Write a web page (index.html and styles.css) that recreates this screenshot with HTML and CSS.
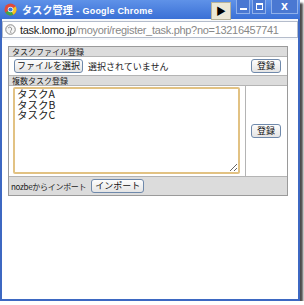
FILE: index.html
```html
<!DOCTYPE html>
<html lang="ja">
<head>
    <meta charset="UTF-8">
    <title>タスク管理</title>
    <link rel="stylesheet" href="styles.css">
</head>
<body>

    <div class="window">
        <div class="titlebar">
            <svg class="logo" width="13" height="13" viewBox="0 0 26 26">
                <circle cx="13" cy="13" r="12" fill="#e04a3a"/>
                <path d="M13 13 L2.6 19 A12 12 0 0 0 19 23.4 Z" fill="#3fa84a"/>
                <path d="M13 13 L19 23.4 A12 12 0 0 0 23.4 7 Z" fill="#f5c722"/>
                <circle cx="13" cy="13" r="5.5" fill="#fff"/>
                <circle cx="13" cy="13" r="4.2" fill="#3b78d8"/>
            </svg>
            <span class="title">タスク管理 - <span class="latin">Google Chrome</span></span>
            <span class="play">&#9654;</span>
            <div class="controls">
                <span class="ctl"><i class="min"></i></span>
                <span class="ctl"><i class="max"></i></span>
                <span class="ctl close">X</span>
            </div>
        </div>

        <div class="toolbar">
            <div class="omnibox">
                <svg class="globe" width="11" height="11" viewBox="0 0 22 22">
                    <circle cx="11" cy="11" r="9.5" fill="#f4f4f4" stroke="#888" stroke-width="2"/>
                    <path d="M6 8 Q9 5 12 7 Q15 10 12 13 Q10 15 12 18" fill="none" stroke="#999" stroke-width="2"/>
                </svg>
                <span class="host">task.lomo.jp</span><span class="path">/moyori/register_task.php?no=13216457741</span>
            </div>
        </div>

        <div class="page">
            <div class="box">
                <div class="head">タスクファイル登録</div>
                <div class="row">
                    <div class="cell grow">
                        <button class="btn">ファイルを選択</button>
                        <span class="none">選択されていません</span>
                    </div>
                    <div class="cell">
                        <button class="btn">登録</button>
                    </div>
                </div>

                <div class="head">複数タスク登録</div>
                <div class="row">
                    <div class="cell grow area-cell">
                        <textarea class="tasks">タスクA
タスクB
タスクC</textarea>
                    </div>
                    <div class="cell side">
                        <button class="btn">登録</button>
                    </div>
                </div>

                <div class="foot">
                    <span>nozbeからインポート</span>
                    <button class="btn">インポート</button>
                </div>
            </div>
        </div>
    </div>

</body>
</html>
```

FILE: styles.css
```css
body {
    margin: 0;
    background-color: #fff;
    font-family: "Noto Sans CJK JP", "Liberation Sans", sans-serif;
}
.window {
    width: 300px;
    height: 301px;
    box-sizing: border-box;
    border: 2px solid #3d68c2;
    border-top: none;
    background-color: #fff;
    box-shadow: 3px 3px 2px rgba(0,0,0,0.7);
    display: flex;
    flex-direction: column;
}
.titlebar {
    height: 19px;
    margin: 0 -2px;
    padding: 0 2px 0 4px;
    display: flex;
    align-items: center;
    background: linear-gradient(#5f92e8, #3a70d6);
}
.logo {
    flex: none;
}
.title {
    margin-left: 5px;
    color: #fff;
    font-family: "Liberation Sans", "Noto Sans CJK JP", sans-serif;
    font-weight: bold;
    font-size: 10px;
    letter-spacing: 0.2px;
}
.title .latin {
    font-size: 9px;
    letter-spacing: 0.2px;
}
.play {
    margin-left: auto;
    align-self: flex-start;
    margin-top: 2px;
    width: 20px;
    height: 18px;
    box-sizing: border-box;
    border: 1px solid #b8b49a;
    background-color: #ece8d6;
    font-size: 10px;
    line-height: 16px;
    text-align: center;
    color: #000;
    position: relative;
    z-index: 1;
}
.controls {
    display: flex;
    align-self: flex-start;
    margin-left: 5px;
    gap: 2px;
}
.ctl {
    width: 14px;
    height: 14px;
    box-sizing: border-box;
    border: 1px solid #8fb0ea;
    border-top: none;
    background-color: #4a78d2;
    display: flex;
    align-items: center;
    justify-content: center;
    color: #fff;
    font-family: "DejaVu Sans", sans-serif;
    font-size: 9px;
    font-weight: bold;
}
.ctl.close {
    width: 27px;
    margin-left: 3px;
}
.min {
    display: block;
    width: 7px;
    height: 2px;
    margin-top: 5px;
    background-color: #fff;
}
.max {
    display: block;
    width: 5px;
    height: 4px;
    border: 1px solid #fff;
    border-top-width: 2px;
}
.toolbar {
    padding: 2px 0 2px 0;
    background-color: #f6f8fb;
}
.omnibox {
    height: 17px;
    box-sizing: border-box;
    border: 1px solid #b4bccb;
    background-color: #fff;
    display: flex;
    align-items: center;
    padding-left: 2px;
    font-family: "Liberation Sans", sans-serif;
    font-size: 11px;
    letter-spacing: -0.3px;
    white-space: nowrap;
}
.globe {
    flex: none;
    margin-right: 4px;
}
.host {
    color: #222;
}
.path {
    color: #888;
}
.page {
    padding: 6px 10px 0 6px;
}
.box {
    border: 1px solid #9a9a9a;
    font-size: 9px;
}
.head {
    height: 9px;
    line-height: 9px;
    padding-left: 3px;
    background-color: #dcdcdc;
    border-bottom: 1px solid #b4b4b4;
    font-size: 8px;
    color: #222;
}
.row {
    display: flex;
    border-bottom: 1px solid #b4b4b4;
}
.cell {
    padding: 2px 6px 2px 5px;
    display: flex;
    align-items: center;
}
.grow {
    flex: 1;
}
.none {
    margin-left: 5px;
    color: #222;
}
.area-cell {
    padding: 1px 4px 2px 4px;
    border-right: 1px solid #b4b4b4;
}
.side {
    width: 30px;
}
.tasks {
    width: 227px;
    height: 87px;
    box-sizing: border-box;
    margin: 0;
    padding: 0 2px;
    border: 2px solid #e2c283;
    border-radius: 2px;
    outline: none;
    resize: both;
    font-family: "Noto Sans CJK JP", sans-serif;
    font-size: 10.5px;
    line-height: 10.5px;
    color: #222;
}
.btn {
    margin: 0;
    padding: 0 2px;
    height: 14px;
    border: 1px solid #6f89ab;
    border-radius: 3px;
    background: linear-gradient(#fdfdfd, #e4e4e4);
    font-family: "Noto Sans CJK JP", sans-serif;
    font-size: 9px;
    line-height: 12px;
    color: #111;
}
.side .btn,
.row .cell:last-child .btn {
    padding: 0 5px;
}
.foot {
    display: flex;
    align-items: center;
    gap: 5px;
    padding: 2px 4px 2px 2px;
    height: 14px;
    background-color: #dcdcdc;
    font-size: 8px;
    letter-spacing: -0.3px;
    color: #222;
}
.foot .btn {
    padding: 0 3px;
    letter-spacing: 0;
}
```
